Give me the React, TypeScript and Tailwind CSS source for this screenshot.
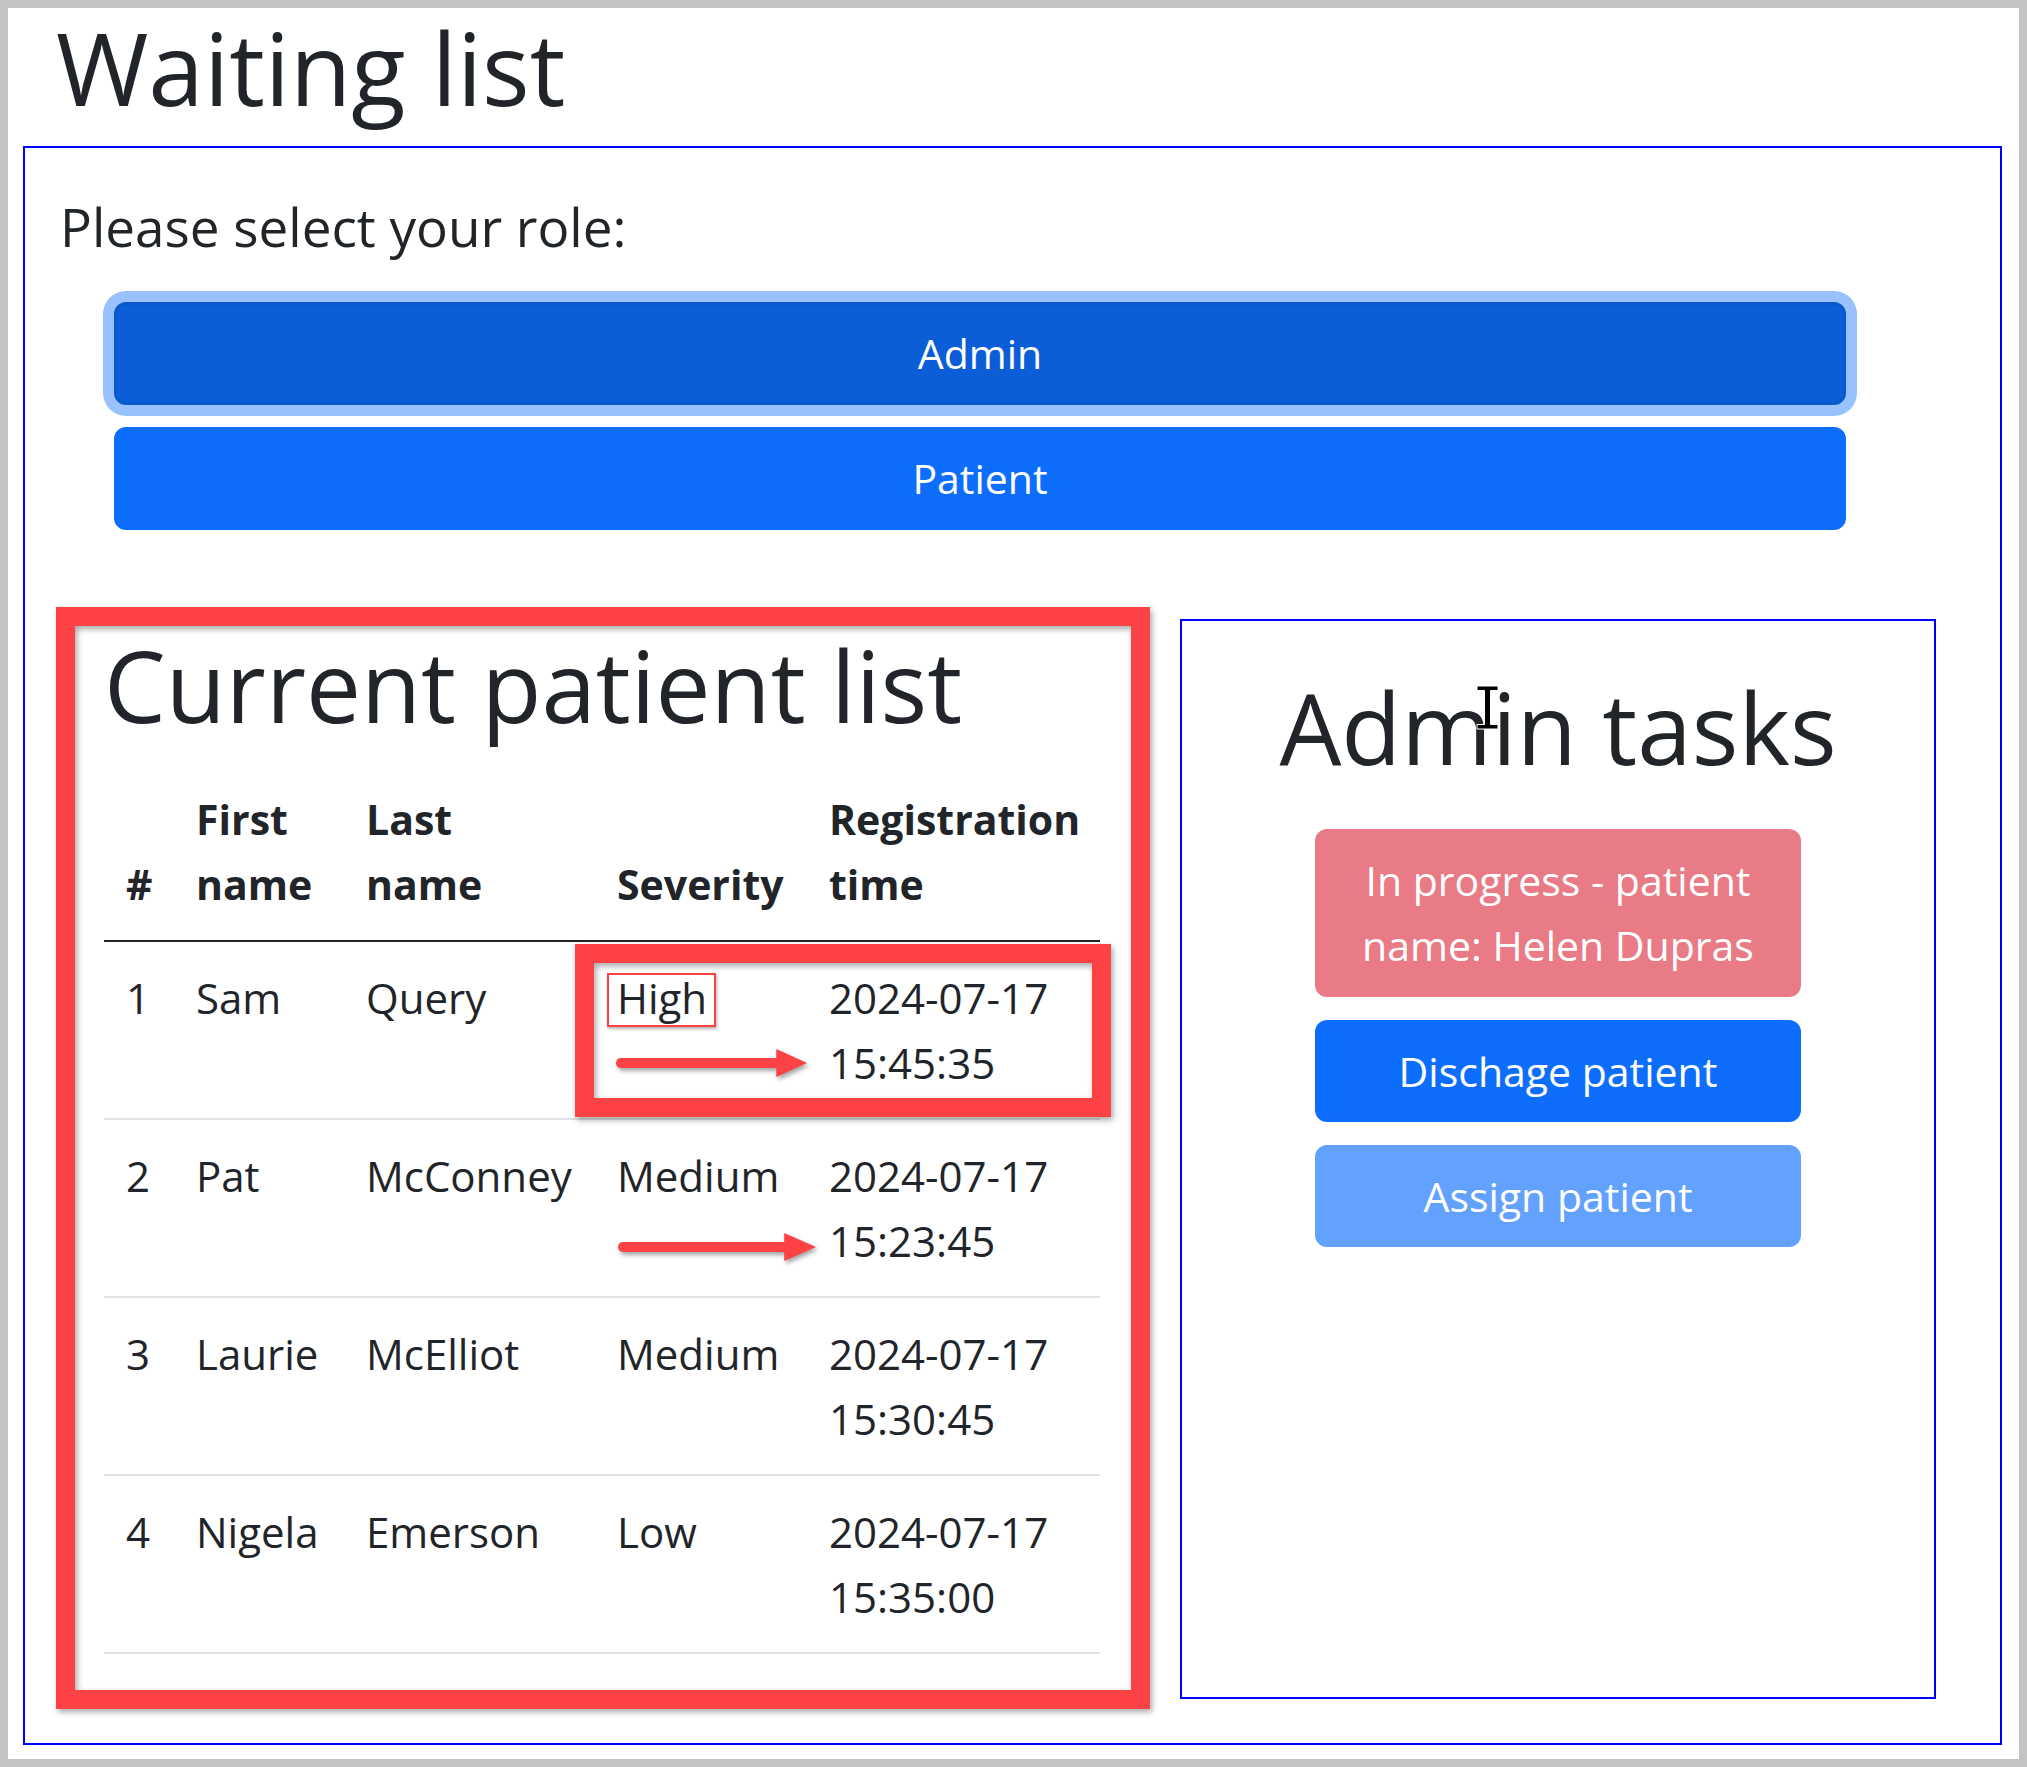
import React from 'react';

type Patient = {
  id: number;
  first: string;
  last: string;
  severity: string;
  date: string;
  time: string;
};

const patients: Patient[] = [
  { id: 1, first: 'Sam', last: 'Query', severity: 'High', date: '2024-07-17', time: '15:45:35' },
  { id: 2, first: 'Pat', last: 'McConney', severity: 'Medium', date: '2024-07-17', time: '15:23:45' },
  { id: 3, first: 'Laurie', last: 'McElliot', severity: 'Medium', date: '2024-07-17', time: '15:30:45' },
  { id: 4, first: 'Nigela', last: 'Emerson', severity: 'Low', date: '2024-07-17', time: '15:35:00' },
];

function Arrow({ className }: { className: string }) {
  return (
    <svg className={className} viewBox="0 0 200 36" preserveAspectRatio="none">
      <path d="M6 18 H172" stroke="#fd4245" strokeWidth="10" strokeLinecap="round" fill="none" />
      <path d="M168 4 L200 18 L168 32 Z" fill="#fd4245" />
    </svg>
  );
}

function Cursor() {
  return (
    <svg className="absolute left-[294px] top-[64px] h-[45px] w-[23px]" viewBox="0 0 23 45">
      <path d="M1 1h21v4.5h-7.5v34H22V44H1v-4.5h7.5v-34H1z" fill="#000" stroke="#fff" strokeWidth="1" />
    </svg>
  );
}

export default function App() {
  return (
    <div className="h-[1767px] w-[2027px] overflow-hidden border-8 border-[#c3c3c3] bg-white font-['Open_Sans',sans-serif] text-[#212529]">
      <h1 className="mb-[19px] ml-[48px] text-[100px] font-medium leading-[119px]">Waiting list</h1>

      <div className="ml-[15px] h-[1599px] w-[1979px] border-2 border-[#0000ff]">
        <h5 className="ml-[35px] mt-[46px] text-[53px] font-medium leading-[66px]">Please select your role:</h5>

        <div className="ml-[89px] mt-[42px] flex w-[1732px] flex-col gap-[22px]">
          <button className="h-[103px] rounded-[12px] border-[3px] border-[#0a58ca] bg-[#0b5ed7] text-[41px] leading-[65px] text-white shadow-[0_0_0_11px_#98c1fe]">
            Admin
          </button>
          <button className="h-[103px] rounded-[12px] border-[3px] border-[#0d6efd] bg-[#0d6efd] text-[41px] leading-[65px] text-white">
            Patient
          </button>
        </div>

        <div className="ml-[31px] mt-[77px] flex items-start gap-[30px]">
          <div className="h-[1102px] w-[1094px] border-[19px] border-[#fd4245] px-[29px] shadow-[2px_3px_6px_rgba(0,0,0,0.35),inset_2px_3px_6px_rgba(0,0,0,0.35)]">
            <h1 className="mb-[20px] text-[98px] font-medium leading-[118px]">Current patient list</h1>

            <div className="relative w-[996px]">
              <table className="w-[996px] table-fixed border-collapse text-[42px] leading-[65px]">
                <colgroup>
                  <col className="w-[70px]" />
                  <col className="w-[170px]" />
                  <col className="w-[251px]" />
                  <col className="w-[212px]" />
                  <col className="w-[293px]" />
                </colgroup>
                <thead>
                  <tr className="border-b-2 border-[#212529] text-left align-bottom font-bold">
                    <th className="px-[22px] py-[23px] text-[41px]">#</th>
                    <th className="px-[22px] py-[23px] text-[41px]">First<br />name</th>
                    <th className="px-[22px] py-[23px] text-[41px]">Last<br />name</th>
                    <th className="px-[22px] py-[23px] text-[41px]">Severity</th>
                    <th className="px-[22px] py-[23px] text-[41px]">Registration<br />time</th>
                  </tr>
                </thead>
                <tbody>
                  {patients.map(p => (
                    <tr key={p.id} className="border-b-2 border-[#dee2e6] align-top">
                      <td className="px-[22px] py-[23px]">{p.id}</td>
                      <td className="px-[22px] py-[23px]">{p.first}</td>
                      <td className="px-[22px] py-[23px]">{p.last}</td>
                      <td className="px-[22px] py-[23px]">{p.severity}</td>
                      <td className="px-[22px] py-[23px]">{p.date}<br />{p.time}</td>
                    </tr>
                  ))}
                </tbody>
              </table>

              <div className="absolute left-[503px] top-[209px] h-[54px] w-[109px] border-2 border-[#fd4245] shadow-[1px_2px_3px_rgba(0,0,0,0.3)]" />
              <div className="absolute left-[471px] top-[180px] h-[173px] w-[536px] border-[19px] border-[#fd4245] shadow-[2px_3px_6px_rgba(0,0,0,0.35),inset_2px_3px_6px_rgba(0,0,0,0.35)]" />
              <Arrow className="absolute left-[511px] top-[281px] h-[36px] w-[192px] drop-shadow-[2px_3px_2px_rgba(0,0,0,0.35)]" />
              <Arrow className="absolute left-[513px] top-[465px] h-[36px] w-[199px] drop-shadow-[2px_3px_2px_rgba(0,0,0,0.35)]" />
            </div>
          </div>

          <div className="relative mt-[12px] flex h-[1080px] w-[756px] flex-col items-center border-2 border-[#0000ff]">
            <h1 className="mt-[47px] text-[98px] font-medium leading-[118px]">Admin tasks</h1>
            <div className="mt-[43px] flex w-[486px] flex-col gap-[23px] text-[41px] leading-[65px] text-white">
              <button className="h-[168px] rounded-[12px] border-[3px] border-transparent bg-[#e87b86]">
                In progress - patient<br />name: Helen Dupras
              </button>
              <button className="h-[102px] rounded-[12px] border-[3px] border-[#0d6efd] bg-[#0d6efd]">Dischage patient</button>
              <button className="h-[102px] rounded-[12px] border-[3px] border-transparent bg-[#62a1fe]">Assign patient</button>
            </div>
            <Cursor />
          </div>
        </div>
      </div>
    </div>
  );
}
